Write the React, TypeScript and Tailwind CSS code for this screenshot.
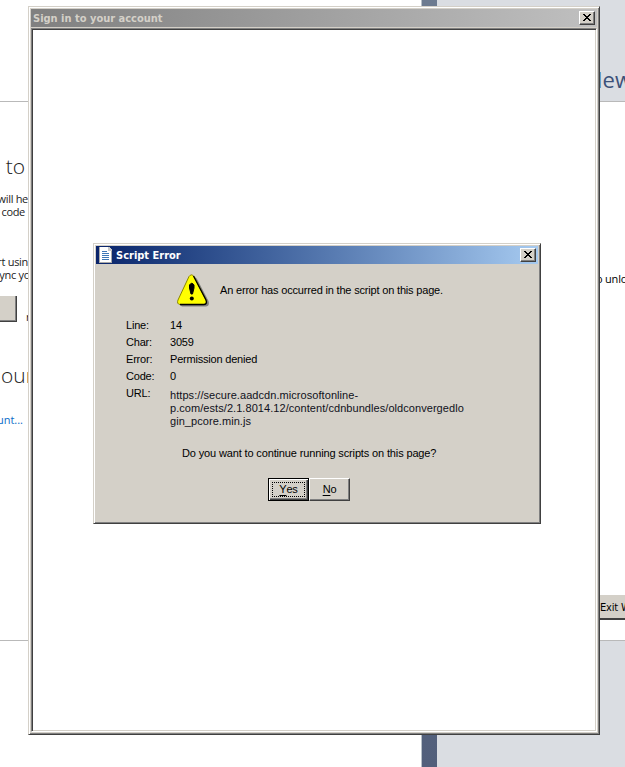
import type { ReactNode } from "react";

function CloseButton() {
  return (
    <button className="flex h-[14px] w-4 shrink-0 items-center justify-center border border-t-white border-l-white border-r-[#404040] border-b-[#404040] bg-[#d4d0c8] shadow-[inset_-1px_-1px_0_#808080]">
      <svg width="8" height="7" viewBox="0 0 8 7" shapeRendering="crispEdges" className="-mt-px">
        <path d="M0 0h2v1h1v1h2V1h1V0h2v1H7v1H6v1H5v1h1v1h1v1h1v1H6V6H5V5H3v1H2v1H0V6h1V5h1V4h1V3H2V2H1V1H0z" fill="#000" />
      </svg>
    </button>
  );
}

function PageIcon() {
  return (
    <svg width="14" height="16" viewBox="0 0 14 16" shapeRendering="crispEdges" className="shrink-0">
      <path d="M0 0h10l3 3v13H0z" fill="#fff" />
      <path d="M0 0h1v16H0zM0 15h13v1H0zM12 3h1v13h-1z" fill="#a9a9a9" />
      <path d="M9 0h1l3 3v1H9z" fill="#c8c8c8" />
      <path d="M3 4h5v1H3zM3 6h7v1H3zM3 8h7v1H3zM3 10h7v1H3zM3 12h7v1H3z" fill="#3e77b5" />
    </svg>
  );
}

function WarningIcon() {
  return (
    <svg width="33" height="33" viewBox="0 0 33 33" className="shrink-0">
      <path d="M16 3.5Q18 2 20 5L31.5 27Q33 32 29 32.500H5L3 31z" fill="#808080" />
      <path d="M12 2.500Q14.500-.8 17 2.500L29 26Q30.500 30 27 30.500H3Q-.5 30 1 26z" fill="#ff0" stroke="#8a8500" strokeWidth="1" />
      <path d="M16.500 2L29 26Q30.500 30 27 30.500H3" fill="none" stroke="#000" strokeWidth="1.300" />
      <path d="M12.500 11Q14.800 7.500 17 11V14L15.500 20H14L12.500 14z" fill="#000" stroke="#000" />
      <circle cx="14.800" cy="24.500" r="2" fill="#000" />
    </svg>
  );
}

function Row({ label, children }: { label: string; children: ReactNode }) {
  return (
    <div className="flex h-[17px] leading-[17px]">
      <span className="w-[44px] shrink-0">{label}</span>
      <span>{children}</span>
    </div>
  );
}

function BackgroundPage() {
  return (
    <div className="flex h-full w-full">
      <div className="flex h-full w-[421px] shrink-0 flex-col bg-white">
        <div className="h-[102px] shrink-0 border-b border-[#b9b9b9]" />
        <div className="flex h-[539px] shrink-0 flex-col border-b border-[#b9b9b9] font-['Open_Sans','Noto_Sans',sans-serif] text-[11px] leading-[13px] tracking-[-0.3px] text-[#222]">
          <div className="mt-[51px] h-[26px] w-[25px] self-start text-right text-[21px] font-light leading-[26px] tracking-normal">to</div>
          <div className="mt-[13px] flex w-[28px] flex-col items-end whitespace-nowrap">
            <span>will he</span>
            <span className="pr-[3px]">code</span>
          </div>
          <div className="mt-[37px] flex w-[28px] flex-col items-end whitespace-nowrap">
            <span>rt usin</span>
            <span className="-mr-0.5">ync yo</span>
          </div>
          <div className="mt-[15px] flex h-[27px] items-start">
            <div className="h-[26px] w-[17px] border-r border-b border-[#404040] bg-[#d4d0c8] shadow-[inset_-1px_-1px_0_#808080]" />
            <span className="ml-[9px] mt-[14px]">r</span>
          </div>
          <div className="mt-[39px] h-[26px] w-[40px] whitespace-nowrap pl-px text-[21px] font-light leading-[26px] tracking-normal">our</div>
          <div className="mt-[25px] flex w-[23px] justify-end whitespace-nowrap tracking-normal text-[#0b6cc8]">unt...</div>
        </div>
      </div>
      <div className="h-full w-4 shrink-0 border-l border-[#b8c0c8] bg-linear-to-b from-[#6d7b90] to-[#525f7b]" />
      <div className="flex h-full w-[188px] shrink-0 flex-col bg-[#dadde2]">
        <div className="h-[102px] shrink-0 overflow-hidden border-b border-[#b9b9b9] pl-[149px] pt-[65px] font-['Open_Sans','Noto_Sans',sans-serif] text-[22px] leading-[28px] text-[#3b5078]">New</div>
        <div className="flex h-[539px] shrink-0 flex-col overflow-hidden border-b border-[#b9b9b9] bg-white pl-[161px] font-['Open_Sans','Noto_Sans',sans-serif] text-[11px] leading-[14px] tracking-[-0.2px] text-black">
          <div className="mt-[170px] -ml-[2px] whitespace-nowrap">o unlo</div>
          <div className="mt-[309px] h-[25px] whitespace-nowrap border-b-2 border-[#404040] bg-[#d4d0c8] pl-[2px] pt-[6px] font-['DejaVu_Sans_Condensed','DejaVu_Sans',sans-serif] tracking-[-0.2px]">Exit W</div>
        </div>
      </div>
    </div>
  );
}

function ScriptErrorDialog() {
  return (
    <div className="absolute top-[243px] left-[93px] flex h-[281px] w-[448px] flex-col border border-t-[#d4d0c8] border-l-[#d4d0c8] border-r-[#404040] border-b-[#404040] bg-[#d4d0c8] p-0.5 font-['Liberation_Sans',Arial,sans-serif] text-[11px] tracking-[-0.2px] text-black shadow-[inset_1px_1px_0_#fff,inset_-1px_-1px_0_#808080]">
      <div className="flex h-[18px] shrink-0 items-center bg-linear-to-r from-[#0a246a] to-[#a6caf0] pl-[3px] pr-0.5 text-white">
        <PageIcon />
        <span className="ml-[3px] flex-1 pt-px font-['DejaVu_Sans_Condensed','DejaVu_Sans',sans-serif] text-[11px] font-bold leading-[17px] tracking-normal">Script Error</span>
        <CloseButton />
      </div>
      <div className="mt-[10px] flex h-[33px] items-center pl-[81px]">
        <WarningIcon />
        <span className="ml-[10px] whitespace-nowrap tracking-[-0.18px]">An error has occurred in the script on this page.</span>
      </div>
      <div className="mt-[10px] pl-[30px]">
        <Row label="Line:">14</Row>
        <Row label="Char:">3059</Row>
        <Row label="Error:">Permission denied</Row>
        <Row label="Code:">0</Row>
        <div className="flex">
          <span className="w-[44px] shrink-0 leading-[17px]">URL:</span>
          <span className="mt-1 whitespace-nowrap leading-[13px] tracking-[0.06px] text-[#101020]">
            https://secure.aadcdn.microsoftonline-<br />
            p.com/ests/2.1.8014.12/content/cdnbundles/oldconvergedlo<br />
            gin_pcore.min.js
          </span>
        </div>
      </div>
      <div className="mt-[17px] pl-[86px] leading-[17px] whitespace-nowrap tracking-[-0.14px]">Do you want to continue running scripts on this page?</div>
      <div className="mt-[16px] flex pl-[172px]">
        <button className="h-[23px] w-[41px] border border-black bg-[#d4d0c8] p-[3px] shadow-[inset_1px_1px_0_#fff,inset_-1px_-1px_0_#404040,inset_-2px_-2px_0_#808080]">
          <span className="flex h-full w-full items-center justify-center border border-dotted border-black"><u className="underline-offset-2">Y</u>es</span>
        </button>
        <button className="flex h-[23px] w-[41px] items-center justify-center border border-t-white border-l-white border-r-[#404040] border-b-[#404040] bg-[#d4d0c8] shadow-[inset_-1px_-1px_0_#808080]">
          <u className="underline-offset-2">N</u>o
        </button>
      </div>
    </div>
  );
}

export default function App() {
  return (
    <div className="relative h-[767px] w-[625px] overflow-hidden bg-white">
      <BackgroundPage />
      <div className="absolute top-[6px] left-[28px] flex h-[729px] w-[572px] flex-col border border-t-[#d4d0c8] border-l-[#d4d0c8] border-r-[#404040] border-b-[#404040] bg-[#d4d0c8] p-0.5 shadow-[inset_1px_1px_0_#fff,inset_-1px_-1px_0_#808080]">
        <div className="flex h-[18px] shrink-0 items-center bg-linear-to-r from-[#808080] to-[#c0c0c0] pl-0.5 pr-0.5">
          <span className="flex-1 pt-px font-['DejaVu_Sans_Condensed','DejaVu_Sans',sans-serif] text-[11px] font-bold leading-[17px] tracking-normal text-[#d4d0c8]">Sign in to your account</span>
          <CloseButton />
        </div>
        <div className="mt-px flex-1 border border-t-[#808080] border-l-[#808080] border-r-white border-b-white bg-white shadow-[inset_1px_1px_0_#404040,inset_-1px_-1px_0_#d4d0c8]" />
      </div>
      <ScriptErrorDialog />
    </div>
  );
}
